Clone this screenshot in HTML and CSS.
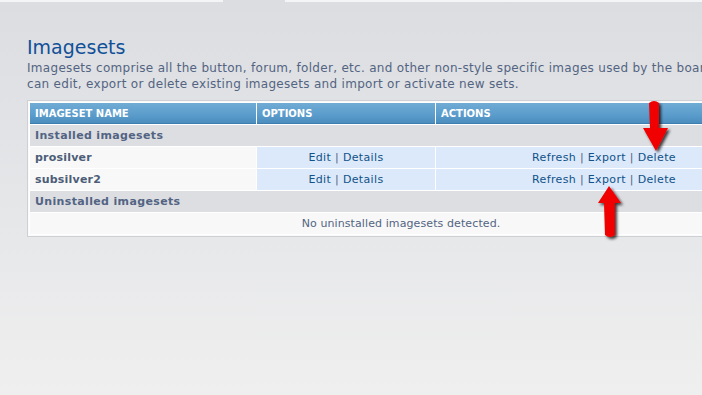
FILE: index.html
```html
<!DOCTYPE html>
<html lang="en">
<head>
    <meta charset="UTF-8">
    <title>Imagesets</title>
    <link rel="stylesheet" href="styles.css">
</head>
<body>
    <div class="topline">
        <span class="tab-a"></span>
        <span class="tab-b"></span>
        <span class="tab-c"></span>
    </div>

    <div class="main">
        <h1>Imagesets</h1>
        <p class="intro">Imagesets comprise all the button, forum, folder, etc. and other non-style specific images used by the board. You<br>can edit, export or delete existing imagesets and import or activate new sets.</p>

        <div class="panel">
            <table class="sets">
                <thead>
                    <tr>
                        <th class="col-name">Imageset name</th>
                        <th class="col-opt">Options</th>
                        <th class="col-act">Actions</th>
                    </tr>
                </thead>
                <tbody>
                    <tr>
                        <td class="group" colspan="3">Installed imagesets</td>
                    </tr>
                    <tr>
                        <td class="name">prosilver</td>
                        <td class="links"><a href="#">Edit</a> | <a href="#">Details</a></td>
                        <td class="links"><a href="#">Refresh</a> | <a href="#">Export</a> | <a href="#">Delete</a></td>
                    </tr>
                    <tr>
                        <td class="name">subsilver2</td>
                        <td class="links"><a href="#">Edit</a> | <a href="#">Details</a></td>
                        <td class="links"><a href="#">Refresh</a> | <a href="#">Export</a> | <a href="#">Delete</a></td>
                    </tr>
                    <tr>
                        <td class="group" colspan="3">Uninstalled imagesets</td>
                    </tr>
                    <tr>
                        <td class="empty" colspan="3">No uninstalled imagesets detected.</td>
                    </tr>
                </tbody>
            </table>
        </div>
    </div>

    <!-- fleches rouges ajoutees sur la capture -->
    <svg class="arrows" width="702" height="395" viewBox="0 0 702 395">
        <defs>
            <filter id="shadow" x="-50%" y="-20%" width="200%" height="140%">
                <feDropShadow dx="2" dy="2" stdDeviation="1.6" flood-color="#000" flood-opacity="0.75"/>
            </filter>
        </defs>
        <path filter="url(#shadow)" fill="#f00000" d="M649 103 Q654 99 659 103 L659 128 L668 128 L656 151 L643 128 L650 128 Z"/>
        <path filter="url(#shadow)" fill="#f00000" d="M609 186 L621 203 L615 203 L615 235 Q610 239 605 235 L604 203 L598 203 Z"/>
    </svg>
</body>
</html>
```

FILE: styles.css
```css
html, body {
    margin: 0;
    overflow: hidden;
}

body {
    width: 702px;
    height: 395px;
    background: linear-gradient(to bottom, #dbdde1 0%, #e6e7e9 55%, #efefef 100%);
    font-family: 'DejaVu Sans', Verdana, sans-serif;
    color: #536482;
    position: relative;
}

.topline {
    display: flex;
    height: 2px;
}

.tab-a {
    width: 223px;
    background: #f4f5f6;
}

.tab-b {
    width: 62px;
    background: #dbdde1;
}

.tab-c {
    flex: 1;
    background: #f4f5f6;
}

.main {
    width: 760px;
    padding: 0 0 0 27px;
}

h1 {
    margin: 32px 0 0 0;
    font-family: 'DejaVu Sans', 'Trebuchet MS', sans-serif;
    font-weight: normal;
    font-size: 19px;
    line-height: 26px;
    color: #115098;
}

.intro {
    margin: 0;
    font-size: 12px;
    letter-spacing: 0.3px;
    line-height: 16px;
    white-space: nowrap;
}

.panel {
    margin-top: 8px;
    width: 744px;
    border: 1px solid #cdd0d5;
    background: #fafafa;
    padding: 1px;
}

.sets {
    width: 100%;
    border-collapse: separate;
    border-spacing: 1px;
    background: #fff;
    font-size: 11px;
}

.sets th {
    height: 20px;
    padding: 0 5px;
    text-align: left;
    font-size: 10px;
    font-weight: bold;
    text-transform: uppercase;
    color: #fff;
    background: linear-gradient(to bottom, #70acd5 0%, #5a9ccb 60%, #4b8dbc 100%);
    border-bottom: 1px solid #3d7db0;
}

.col-name {
    width: 216px;
}

.col-opt {
    width: 168px;
}

.sets td {
    height: 21px;
    padding: 0 5px;
}

.group {
    background: #dcdee2;
    font-weight: bold;
    letter-spacing: 0.35px;
    color: #536482;
}

.name {
    background: #f8f8f8;
    font-weight: bold;
    letter-spacing: 0.2px;
    color: #4c5d77;
}

.links {
    background: #dce9fa;
    text-align: center;
    letter-spacing: 0.35px;
    color: #536482;
}

.links a {
    color: #105289;
    text-decoration: none;
}

.empty {
    background: #f8f8f8;
    text-align: center;
    letter-spacing: 0.1px;
    color: #536482;
}

.arrows {
    position: absolute;
    top: 0;
    left: 0;
    pointer-events: none;
}
```
